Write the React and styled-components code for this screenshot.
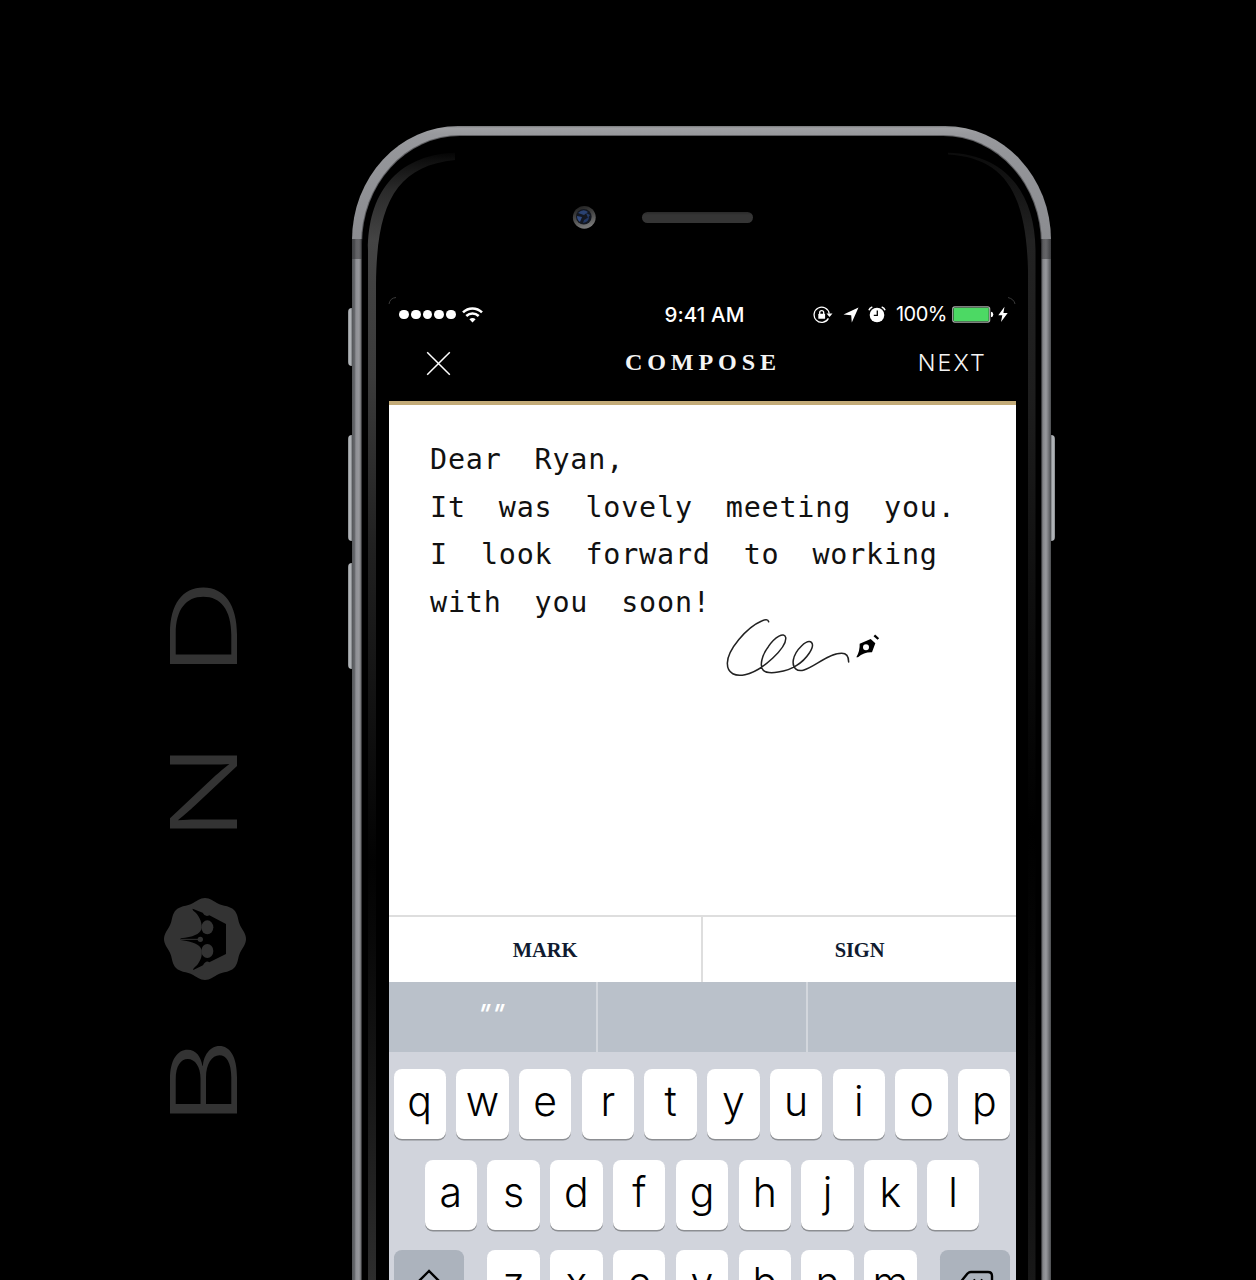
import React from "react";
import styled, { createGlobalStyle } from "styled-components";

const GlobalStyle = createGlobalStyle`
  *, *::before, *::after { box-sizing: border-box; }
  body { margin: 0; background: #000; font-family: Inter, "Liberation Sans", sans-serif; }
`;

const Page = styled.main`
  display: flex;
  align-items: flex-start;
  width: 1256px;
  height: 1280px;
  overflow: hidden;
  background: #000;
`;

/* ---------- wordmark ---------- */

const Wordmark = styled.aside`
  display: flex;
  flex-direction: column;
  align-items: center;
  flex: none;
  width: 352px;
  padding: 588px 0 0 56px;
`;

const Letter = styled.div`
  display: flex;
  align-items: center;
  justify-content: center;
  width: 67px;
  height: ${(p) => p.$length}px;
  margin-bottom: ${(p) => p.$after}px;
  color: #333;
  font: 350 92px/1 Inter, "Liberation Sans", sans-serif;

  span {
    display: block;
    transform: rotate(-90deg) scaleX(${(p) => p.$stretch});
  }
`;

const SealBox = styled.div`
  width: 82px;
  height: 82px;
  margin: 0 0 67px 2px;

  svg { display: block; }
`;

/* ---------- device ---------- */

const Phone = styled.section`
  position: relative;
  flex: none;
  width: 699px;
  height: 1300px;
  margin-top: 126px;
`;

const Chassis = styled.div`
  position: relative;
  height: 100%;
  padding: 10px 10px 0;
  border-radius: 106px 106px 0 0 / 114px 114px 0 0;
  background:
    linear-gradient(90deg, rgba(40,40,42,.45) 0 10px, transparent 10px 689px, rgba(40,40,42,.45) 689px) 0 113px / 100% 20px no-repeat,
    linear-gradient(90deg, #55575a 0, #66686c 2.5px, #8f9095 4px, #97989c 7px, #77787b 8.5px, #3c3d3f 10px, #3c3d3f 689px, #85868a 691px, #98999d 694px, #7d7e82 696px, #4b4d50 699px) 0 113px / 100% 100% no-repeat,
    linear-gradient(180deg, #77787b 0, #a0a1a4 2px, #98999d 8px, #949599 30px, #8b8c90 113px);
`;

const Glass = styled.div`
  height: 100%;
  padding: 0 26px 0 27px;
  border-radius: 98px 98px 0 0 / 108px 108px 0 0;
  background: #000;
  box-shadow: 0 0 0 1px rgba(40, 40, 42, .5);
`;

const SideButton = styled.div`
  position: absolute;
  top: ${(p) => p.$top}px;
  ${(p) => p.$side}: -4px;
  width: 8px;
  height: ${(p) => p.$height}px;
  border-radius: ${(p) => (p.$side === "left" ? "4px 0 0 4px" : "0 4px 4px 0")};
  background: linear-gradient(${(p) => (p.$side === "left" ? "90deg" : "270deg")}, #85888b 0, #bcc0c4 2px, #a0a3a7 3px, #4c4e50 5px);
`;

const Reflection = styled.svg`
  position: absolute;
  inset: 0;
  pointer-events: none;
`;

const EarRow = styled.div`
  display: flex;
  align-items: center;
  height: 161px;
  padding-left: 183px;
`;

const Camera = styled.svg`
  flex: none;
  margin-right: 45.5px;
`;

const Speaker = styled.div`
  width: 111px;
  height: 11px;
  margin-top: 2px;
  border-radius: 6px;
  background: linear-gradient(#292929, #353535 3px);
`;

/* ---------- screen ---------- */

const Screen = styled.div`
  position: relative;
  width: 627px;
`;

const StatusBar = styled.div`
  display: grid;
  grid-template-columns: 1fr auto 1fr;
  align-items: center;
  height: 35px;
  padding: 0 8px 0 10px;
  color: #fff;
  font-size: 20.5px;
  line-height: 35px;
`;

const Signal = styled.div`
  display: flex;
  align-items: center;
  gap: 2px;

  svg { margin-left: 4px; }
`;

const Dot = styled.i`
  width: 9.8px;
  height: 9.8px;
  border-radius: 50%;
  background: #fff;
`;

const Clock = styled.time`
  font-weight: 500;
  letter-spacing: .1px;
  transform: translateX(1px);
`;

const StatusIcons = styled.div`
  display: flex;
  align-items: center;
  justify-content: flex-end;

  svg { flex: none; }
`;

const Charge = styled.span`
  margin: 0 5px 0 10px;
  font-size: 20px;
  font-weight: 400;
  letter-spacing: -.5px;
`;

const NavBar = styled.header`
  display: grid;
  grid-template-columns: 1fr auto 1fr;
  align-items: center;
  height: 73px;
  padding: 0 29px 7px 37px;
  border-bottom: 4px solid #c3ab78;
  color: #f4f4f4;
`;

const Title = styled.h1`
  margin: 0;
  font: 700 22.5px/28px "Liberation Serif", serif;
  letter-spacing: 4.6px;
  transform: translate(-4px, 0) scaleX(1.07);
`;

const NavAction = styled.button`
  justify-self: ${(p) => p.$align};
  padding: 0;
  border: 0;
  background: none;
  color: inherit;
  font: 350 23.3px/28px Inter, sans-serif;
  letter-spacing: 2.1px;

  svg { display: block; margin-top: 1px; }
`;

const Note = styled.div`
  position: relative;
  height: 510px;
  padding: 31px 41px;
  background: #fff;
  color: #111;
  font: 400 28.4px/47.7px "DejaVu Sans Mono", monospace;
  letter-spacing: .8px;
  word-spacing: -1.4px;
  white-space: pre;
`;

const Signature = styled.svg`
  position: absolute;
  left: 311px;
  top: 195px;
`;

const Tabs = styled.div`
  display: grid;
  grid-template-columns: 314px 1fr;
  height: 67px;
  border-top: 2px solid #dedede;
  background: #fff;
`;

const Tab = styled.button`
  padding: 1px 0 0;
  border: 0;
  border-right: ${(p) => (p.$divided ? "2px solid #dedede" : "0")};
  background: none;
  color: #101b30;
  font: 700 20.5px/28px "Liberation Serif", serif;
  letter-spacing: -.1px;
`;

const Suggestions = styled.div`
  display: grid;
  grid-template-columns: 208.5px 210.5px 1fr;
  height: 70px;
  background: #bac1ca;
`;

const Suggestion = styled.div`
  padding: 17px 2px 0 0;
  border-right: ${(p) => (p.$last ? "0" : "2px solid #d3d7dd")};
  color: #fff;
  font: italic 500 26px/30px Inter, sans-serif;
  letter-spacing: 1px;
  text-align: center;

  span {
    display: inline-block;
    transform: skewX(-9deg);
  }
`;

const Keyboard = styled.div`
  display: flex;
  flex-direction: column;
  gap: 20.5px;
  height: 380px;
  padding: 17px 5.5px 0 4.5px;
  background: #d1d4dc;
`;

const KeyRow = styled.div`
  display: flex;
  justify-content: ${(p) => (p.$spread ? "space-between" : "center")};
  gap: ${(p) => (p.$spread ? 0 : 10.4)}px;
`;

const KeyGroup = styled.div`
  display: flex;
  gap: 10.4px;
`;

const Key = styled.button`
  display: flex;
  align-items: center;
  justify-content: center;
  width: ${(p) => (p.$wide ? 70 : 52.4)}px;
  height: 70px;
  padding: 0 0 6px;
  border: 0;
  border-radius: 8px;
  background: ${(p) => (p.$wide ? "#acb3bd" : "#fff")};
  box-shadow: 0 1.5px 0 #8c8e92;
  color: #000;
  font: 350 41px/60px Inter, sans-serif;

  svg { margin-top: 4px; }
`;

const sealOutline = Array.from({ length: 145 }, (_, i) => {
  const a = (i / 144) * Math.PI * 2;
  const r = 39.3 + 1.7 * Math.cos(8 * a);
  return `${i ? "L" : "M"}${(41 + r * Math.cos(a)).toFixed(2)} ${(41 + r * Math.sin(a)).toFixed(2)}`;
}).join("");

const Seal = () => (
  <SealBox>
    <svg width="82" height="82" viewBox="0 0 82 82">
      <path d={`${sealOutline}Z`} fill="#333" />
      <g transform="translate(-14 -18) scale(.33333)">
        <path
          fill="#000"
          d="M128 86 L158 98 Q166 113 178 106 L228 132 V222 L178 247 Q168 240 159 256 L130 270 C128 266 134 262 142 254 C154 240 158 222 154 208 C149 193 130 186 92 180 V175 C130 171 149 163 154 148 C158 132 150 112 138 99 C132 93 126 90 128 86Z"
        />
        <ellipse cx="172" cy="142" rx="18" ry="21" fill="#333" />
        <ellipse cx="172" cy="213" rx="18" ry="21" fill="#333" />
        <circle cx="151" cy="178" r="8" fill="#333" />
        <path d="M92 178H151" stroke="#333" strokeWidth="3" />
      </g>
    </svg>
  </SealBox>
);

const WifiIcon = () => (
  <svg width="21" height="16" viewBox="0 0 21 16" fill="none" stroke="#fff" strokeWidth="2.5">
    <path d="M1 5.4C6.300 .1 14.700 .1 20 5.400" />
    <path d="M4.300 9C7.900 5.500 13.100 5.500 16.700 9" />
    <path d="M10.500 15.400L7.400 12.200Q10.500 9.600 13.600 12.200Z" fill="#fff" stroke="none" />
  </svg>
);

const LockIcon = () => (
  <svg width="20" height="18" viewBox="0 0 20 18" fill="none" stroke="#fff">
    <path d="M15.400 12.400A7.600 7.600 0 1 1 16.200 7.600" strokeWidth="1.300" />
    <path d="M13.500 7.600H19.500L16.500 11Z" fill="#fff" stroke="none" />
    <path d="M6.700 8V6.600a2 2 0 0 1 4 0V8" strokeWidth="1.300" />
    <rect x="5.300" y="7.800" width="6.800" height="5" rx=".6" fill="#fff" stroke="none" />
  </svg>
);

const LocationIcon = () => (
  <svg width="16" height="16" viewBox="0 0 16 16" style={{ marginLeft: 10 }}>
    <path d="M15.500 .5L8.800 15.500L8.200 8.200L.5 7.400Z" fill="#fff" />
  </svg>
);

const AlarmIcon = () => (
  <svg width="18" height="17" viewBox="0 0 18 17" fill="none" style={{ marginLeft: 9 }}>
    <circle cx="9" cy="9" r="7.300" fill="#fff" />
    <path d="M1 4.200Q1.600 1.800 4.300 1M13.700 1Q16.400 1.800 17 4.200" stroke="#fff" strokeWidth="1.600" />
    <path d="M9.300 4.600V9.300H5.800" stroke="#000" strokeWidth="1.300" />
  </svg>
);

const BatteryIcon = () => (
  <svg width="42" height="17" viewBox="0 0 42 17">
    <rect x=".7" y=".9" width="37" height="15.200" rx="2" fill="#000" stroke="#a9a9a9" strokeWidth="1.200" />
    <rect x="1.600" y="1.800" width="35.200" height="13.400" rx=".8" fill="#4cd964" />
    <path d="M39 5.700Q41.300 6 41.300 8.500T39 11.300Z" fill="#fff" />
  </svg>
);

const BoltIcon = () => (
  <svg width="10" height="17" viewBox="0 0 10 17" style={{ marginLeft: 4 }}>
    <path d="M6.500 .8L.3 9.200H4.300L3 16L9.700 7H5.400Z" fill="#fff" />
  </svg>
);

const CloseIcon = () => (
  <svg width="25" height="25" viewBox="0 0 25 25" stroke="#fff" strokeWidth="1.500">
    <path d="M1.200 1.200L23.800 23.800M23.800 1.200L1.200 23.800" />
  </svg>
);

const ShiftIcon = () => (
  <svg width="32" height="30" viewBox="0 0 32 30" fill="none" stroke="#000" strokeWidth="2.400" strokeLinejoin="miter">
    <path d="M16 2L3 15H10V27H22V15H29Z" />
  </svg>
);

const DeleteIcon = () => (
  <svg width="37" height="28" viewBox="0 0 37 28" fill="none" stroke="#000" strokeWidth="2.400" strokeLinejoin="round">
    <path d="M14 2H31Q35 2 35 6V22Q35 26 31 26H14Q12 26 10.500 24.500L2 14L10.500 3.500Q12 2 14 2Z" />
    <path d="M16.500 9.500L25.500 18.500M25.500 9.500L16.500 18.500" />
  </svg>
);

const DeviceReflection = () => (
  <Reflection width="699" height="1154" viewBox="352 126 699 1154">
    <defs>
      <linearGradient id="leftGlow" gradientUnits="userSpaceOnUse" x1="0" y1="150" x2="0" y2="1280">
        <stop offset="0" stopColor="#000" />
        <stop offset=".009" stopColor="#0e0e0e" />
        <stop offset=".035" stopColor="#2a2a2a" />
        <stop offset=".08" stopColor="#444" />
        <stop offset=".2" stopColor="#3b3b3b" />
        <stop offset=".35" stopColor="#212121" />
        <stop offset=".5" stopColor="#111" />
        <stop offset=".63" stopColor="#020202" />
        <stop offset=".7" stopColor="#080808" />
        <stop offset=".85" stopColor="#191919" />
        <stop offset="1" stopColor="#2d2d2d" />
      </linearGradient>
      <linearGradient id="rightGlow" gradientUnits="userSpaceOnUse" x1="0" y1="150" x2="0" y2="1280">
        <stop offset="0" stopColor="#0b0b0b" />
        <stop offset=".08" stopColor="#222" />
        <stop offset=".22" stopColor="#1d1d1d" />
        <stop offset=".4" stopColor="#0e0e0e" />
        <stop offset=".6" stopColor="#000" />
        <stop offset=".7" stopColor="#040404" />
        <stop offset="1" stopColor="#181818" />
      </linearGradient>
    </defs>
    <path d="M455 152.700C395 155 368 195 368 250V1280H376V285C376.500 205 395 166 455 160Z" fill="url(#leftGlow)" />
    <path d="M948 152.700C1003 154 1035 190 1035.500 250V1280H1028V270C1026 190 1003 158 948 154.500Z" fill="url(#rightGlow)" />
    <path d="M389 304Q390 298 396 297.500M1008 297.500Q1014 299 1015 304" fill="none" stroke="#3a3a3a" />
  </Reflection>
);

const CameraLens = () => (
  <Camera width="24" height="24" viewBox="0 0 24 24">
    <defs>
      <linearGradient id="ring" x1="0" y1="0" x2="0.300" y2="1">
        <stop offset="0" stopColor="#1a1a1a" />
        <stop offset=".5" stopColor="#444" />
        <stop offset="1" stopColor="#777" />
      </linearGradient>
    </defs>
    <circle cx="12.300" cy="12.300" r="11.400" fill="url(#ring)" />
    <circle cx="11.800" cy="11.800" r="7.800" fill="#141821" />
    <path d="M6 8Q11 3 16 7L12 10Z" fill="#2a4272" />
    <path d="M5 11L10 12L8 17Q5 15 5 11Z" fill="#314b82" />
    <path d="M12 15L17 12Q17 17 11 18Z" fill="#213663" />
    <path d="M14 8L18 10L16 13Z" fill="#263c67" />
  </Camera>
);

const InkSignature = () => (
  <Signature width="200" height="90" viewBox="0 0 600 270" fill="none">
    <path
      d="M206 65C204 58 196 58 185 63C140 82 82 150 82 190C82 222 108 230 135 224C190 212 262 140 257 112C253 95 225 110 205 140C185 165 178 200 190 211C205 225 260 216 290 196C320 178 345 140 335 128C322 115 285 150 280 180C276 205 292 216 312 210C345 200 385 160 425 160C440 160 446 172 446 186"
      stroke="#222"
      strokeWidth="4.600"
      strokeLinecap="round"
    />
    <path fillRule="evenodd" d="M469 172Q480 152 479 131L512 117L526 130L516 157Q492 156 474 172ZM498 133A9 9 0 1 0 498 151A9 9 0 1 0 498 133Z" fill="#000" />
    <path d="M523 106L535 117" stroke="#000" strokeWidth="7" />
  </Signature>
);

const noteText = `Dear  Ryan,
It  was  lovely  meeting  you.
I  look  forward  to  working
with  you  soon!`;

const renderKeys = (letters) => [...letters].map((c) => <Key key={c}>{c}</Key>);

export default function App() {
  return (
    <>
      <GlobalStyle />
      <Page>
        <Wordmark>
          <Letter $length={79} $after={88} $stretch={1.49}><span>D</span></Letter>
          <Letter $length={74} $after={69} $stretch={1.4}><span>N</span></Letter>
          <Seal />
          <Letter $length={69} $after={0} $stretch={1.5}><span>B</span></Letter>
        </Wordmark>

        <Phone>
          <SideButton $side="left" $top={182} $height={58} />
          <SideButton $side="left" $top={309} $height={106} />
          <SideButton $side="left" $top={437} $height={106} />
          <SideButton $side="right" $top={309} $height={106} />
          <Chassis>
            <Glass>
              <EarRow>
                <CameraLens />
                <Speaker />
              </EarRow>
              <Screen>
                <StatusBar>
                  <Signal>
                    <Dot /><Dot /><Dot /><Dot /><Dot />
                    <WifiIcon />
                  </Signal>
                  <Clock>9:41 AM</Clock>
                  <StatusIcons>
                    <LockIcon />
                    <LocationIcon />
                    <AlarmIcon />
                    <Charge>100%</Charge>
                    <BatteryIcon />
                    <BoltIcon />
                  </StatusIcons>
                </StatusBar>
                <NavBar>
                  <NavAction $align="start" aria-label="Close"><CloseIcon /></NavAction>
                  <Title>COMPOSE</Title>
                  <NavAction $align="end">NEXT</NavAction>
                </NavBar>
                <Note>
                  {noteText}
                  <InkSignature />
                </Note>
                <Tabs>
                  <Tab $divided>MARK</Tab>
                  <Tab>SIGN</Tab>
                </Tabs>
                <Suggestions>
                  <Suggestion><span>""</span></Suggestion>
                  <Suggestion />
                  <Suggestion $last />
                </Suggestions>
                <Keyboard>
                  <KeyRow>{renderKeys("qwertyuiop")}</KeyRow>
                  <KeyRow>{renderKeys("asdfghjkl")}</KeyRow>
                  <KeyRow $spread>
                    <Key $wide aria-label="Shift"><ShiftIcon /></Key>
                    <KeyGroup>{renderKeys("zxcvbnm")}</KeyGroup>
                    <Key $wide aria-label="Delete"><DeleteIcon /></Key>
                  </KeyRow>
                </Keyboard>
              </Screen>
            </Glass>
          </Chassis>
          <DeviceReflection />
        </Phone>
      </Page>
    </>
  );
}
